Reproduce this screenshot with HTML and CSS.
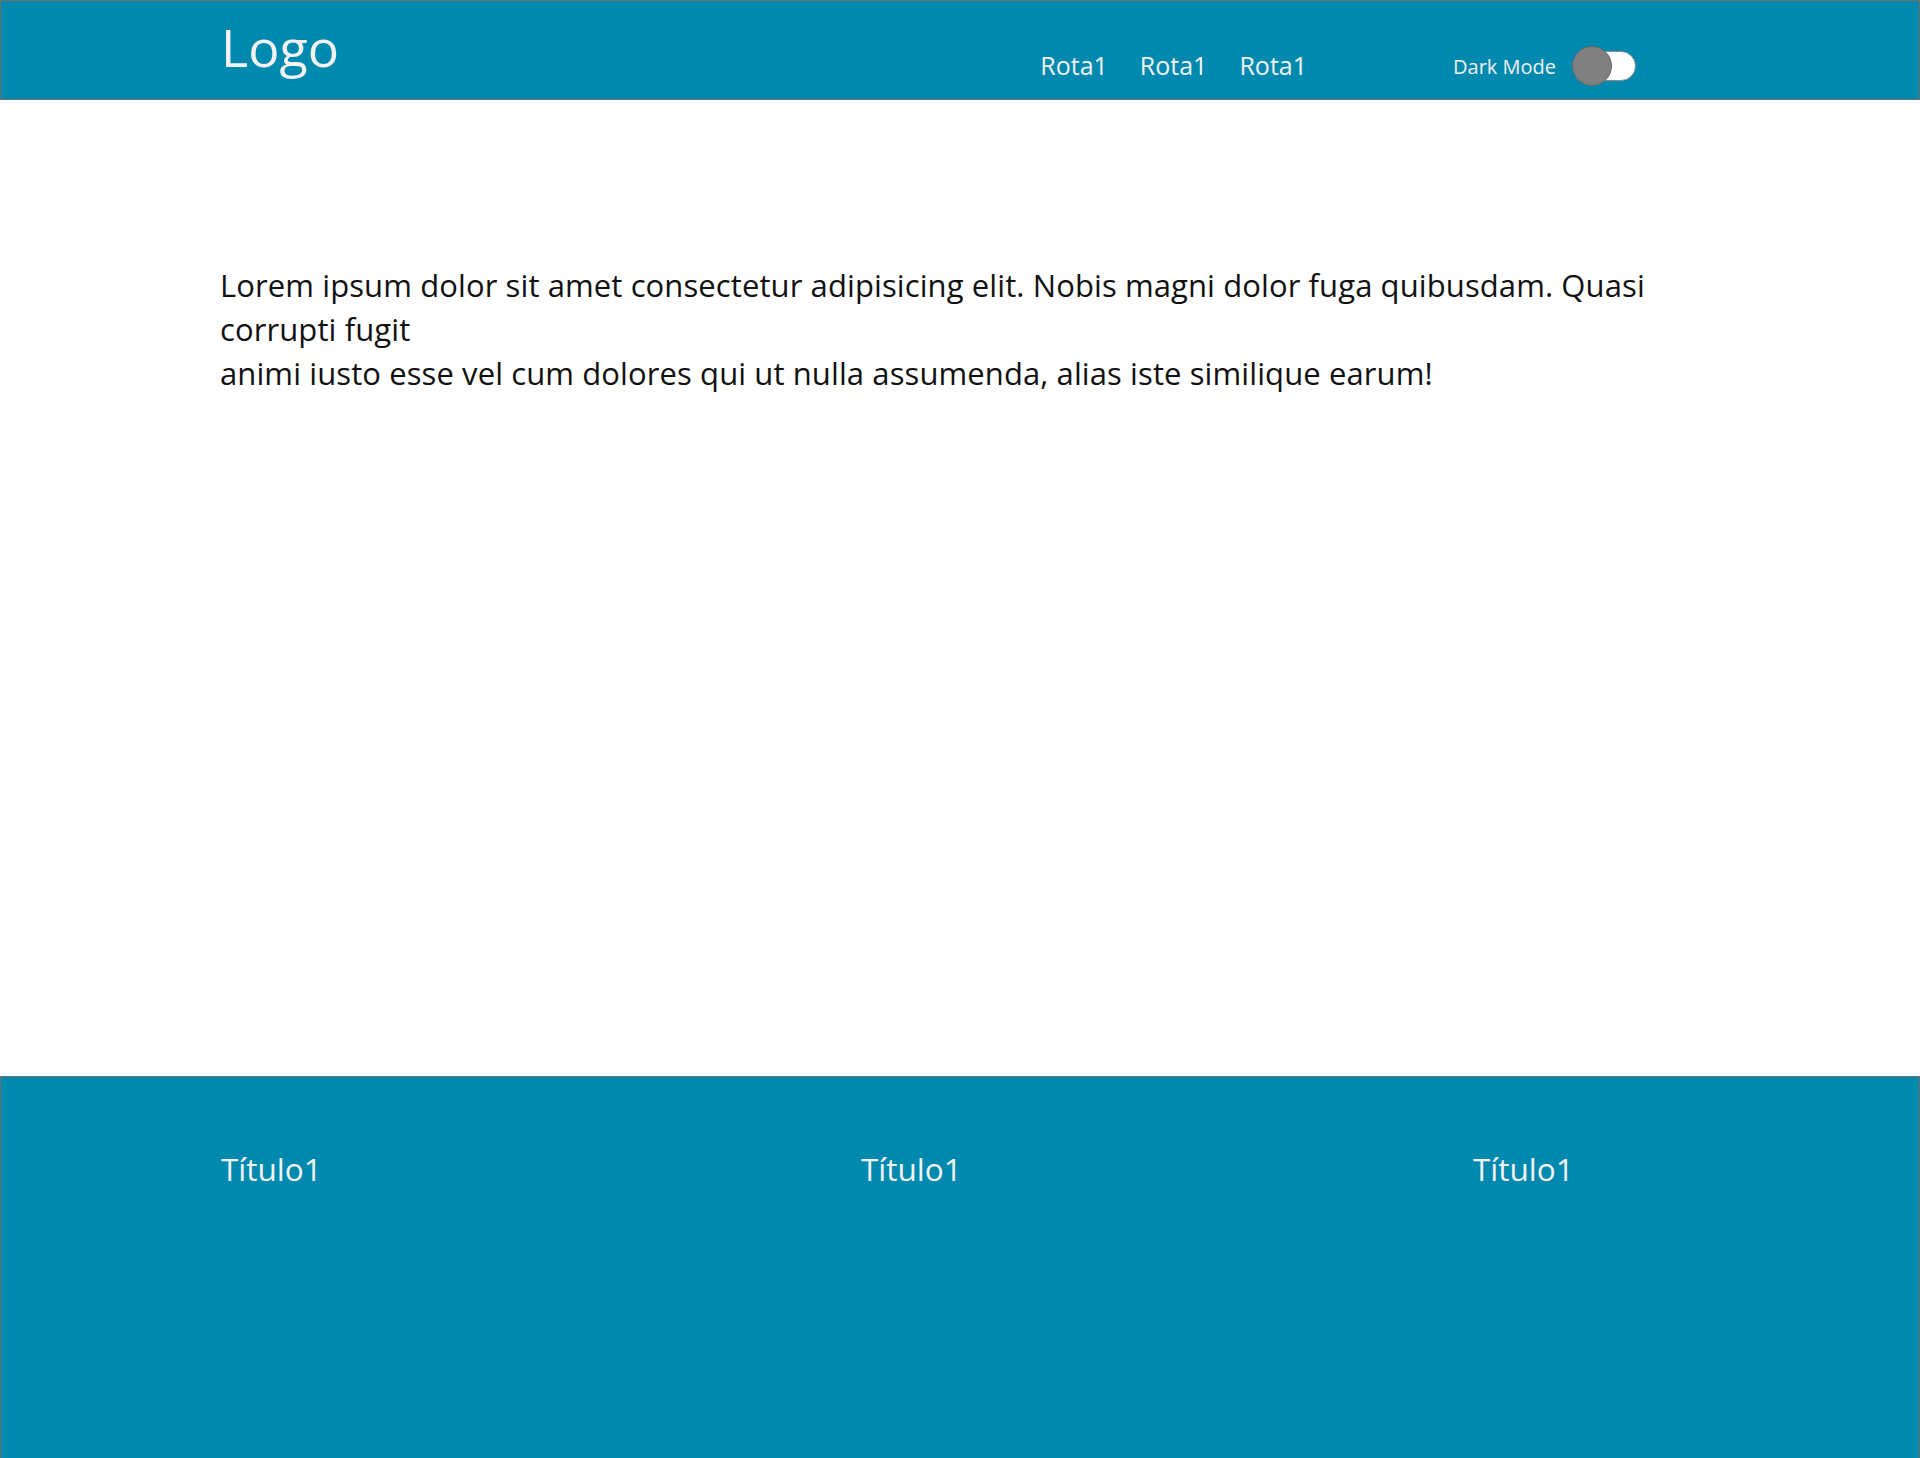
FILE: index.html
```html
<!DOCTYPE html>
<html lang="pt">
<head>
<meta charset="utf-8">
<title>Logo</title>
<link rel="stylesheet" href="styles.css">
</head>
<body>
<header class="site-header">
  <div class="header-inner">
    <div class="logo">Logo</div>
    <nav class="nav">
      <a class="nav-link" href="#">Rota1</a>
      <a class="nav-link" href="#">Rota1</a>
      <a class="nav-link" href="#">Rota1</a>
    </nav>
    <div class="dark-mode">
      <span class="dark-label">Dark Mode</span>
      <span class="toggle"><span class="toggle-track"></span><span class="toggle-knob"></span></span>
    </div>
  </div>
</header>
<main class="content">
  <p class="lorem">Lorem ipsum dolor sit amet consectetur adipisicing elit. Nobis magni dolor fuga quibusdam. Quasi corrupti fugit<br>animi iusto esse vel cum dolores qui ut nulla assumenda, alias iste similique earum!</p>
</main>
<footer class="site-footer">
  <div class="footer-inner">
    <h3 class="footer-title">Título1</h3>
    <h3 class="footer-title">Título1</h3>
    <h3 class="footer-title">Título1</h3>
  </div>
</footer>
</body>
</html>
```
FILE: styles.css
```css
* { box-sizing: border-box; }
html, body { margin: 0; padding: 0; }
body {
  font-family: "Open Sans", "Noto Sans", sans-serif;
  background: #ffffff;
  color: #111111;
}
.site-header {
  height: 100px;
  background: #0089ae;
  border: 1px solid #6f6f6f;
  color: #f2f2f2;
}
.header-inner {
  height: 100%;
  padding: 0 283px 0 220px;
  display: flex;
  align-items: flex-start;
}
.logo {
  font-size: 52px;
  line-height: 1;
  margin-top: 20px;
}
.nav {
  margin-left: auto;
  display: flex;
  gap: 32px;
  margin-top: 47px;
}
.nav-link {
  color: #f2f2f2;
  text-decoration: none;
  font-size: 25px;
}
.dark-mode {
  margin-left: 146px;
  margin-top: 45px;
  display: flex;
  align-items: center;
  gap: 16px;
}
.dark-label {
  font-size: 20px;
}
.toggle {
  position: relative;
  width: 64px;
  height: 40px;
  display: inline-block;
}
.toggle-track {
  position: absolute;
  left: 8px;
  right: 0;
  top: 5px;
  height: 30px;
  border-radius: 15px;
  background: #ffffff;
  border: 1px solid #8a8a8a;
}
.toggle-knob {
  position: absolute;
  left: 0;
  top: 0;
  width: 40px;
  height: 40px;
  border-radius: 50%;
  background: #808080;
  border: 1px solid #6a6a6a;
}
.content {
  height: 976px;
  padding: 163px 220px 0 220px;
}
.lorem {
  margin: 0;
  font-size: 31px;
  line-height: 44px;
  letter-spacing: 0.1px;
  max-width: 1480px;
}
.site-footer {
  height: 382px;
  background: #0089ae;
  border: 1px solid #6f6f6f;
  border-bottom: none;
  color: #f2f2f2;
}
.footer-inner {
  padding: 70px 0 0 220px;
  display: grid;
  grid-template-columns: 640px 612px auto;
}
.footer-title {
  margin: 0;
  font-weight: 400;
  font-size: 31.5px;
}
```
